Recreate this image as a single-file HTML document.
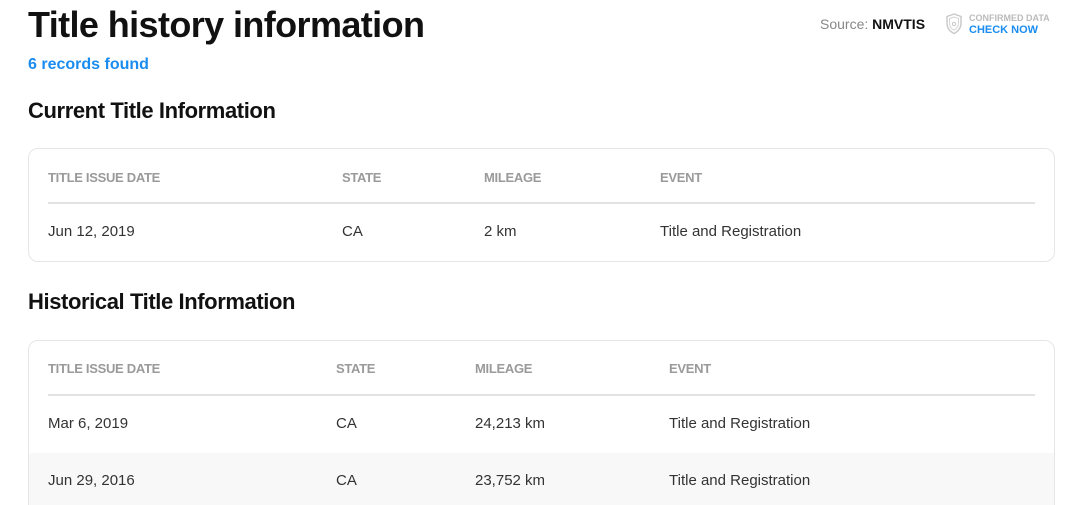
<!DOCTYPE html>
<html style="height:505px;overflow:hidden"><head><style>
body{margin:0;width:1080px;height:505px;overflow:hidden;background:#fff;font-family:"Liberation Sans",sans-serif;color:#222;position:relative}
.a{position:absolute;white-space:nowrap}
.card{position:absolute;left:28px;width:1025px;border:1px solid #e6e6e6;border-radius:10px;overflow:hidden}
.h{font-size:13px;font-weight:bold;color:#9a9a9a;letter-spacing:-0.3px}
.c{font-size:15px;color:#333}
.line{position:absolute;left:19px;right:19px;height:2px;background:#e2e2e2}
</style></head><body>
<div class="a" style="left:28px;top:4px;font-size:36px;font-weight:bold;letter-spacing:-0.6px;color:#111">Title history information</div>
<div class="a" style="left:28px;top:56px;font-size:16px;font-weight:bold;color:#1a8cf0">6 records found</div>
<div class="a" style="left:820px;top:16px;font-size:14px;color:#888">Source: <span style="color:#111;font-weight:bold">NMVTIS</span></div>
<svg class="a" style="left:945px;top:13px" width="18" height="22" viewBox="0 0 18 22"><path d="M9 1L2 3.5V10c0 5 3 8.5 7 10.5 4-2 7-5.5 7-10.5V3.5z" fill="none" stroke="#c8c8c8" stroke-width="1.4"/><path d="M9 4L4.5 5.5V10c0 3.3 2 5.8 4.5 7.2 2.5-1.4 4.5-3.9 4.5-7.2V5.5z" fill="none" stroke="#d5d5d5" stroke-width="1"/><circle cx="9" cy="11" r="1.6" fill="none" stroke="#c8c8c8"/></svg>
<div class="a" style="left:969px;top:13px;font-size:9px;font-weight:bold;color:#bbb">CONFIRMED DATA</div>
<div class="a" style="left:969px;top:24px;font-size:11px;font-weight:bold;color:#1a8cf0">CHECK NOW</div>
<div class="a" style="left:28px;top:98px;font-size:22px;font-weight:bold;color:#111;letter-spacing:-0.4px">Current Title Information</div>
<div class="card" style="top:148px;height:112px">
<div class="a h" style="left:19px;top:21px">TITLE ISSUE DATE</div>
<div class="a h" style="left:313px;top:21px">STATE</div>
<div class="a h" style="left:455px;top:21px">MILEAGE</div>
<div class="a h" style="left:631px;top:21px">EVENT</div>
<div class="line" style="top:53px"></div>
<div class="a c" style="left:19px;top:74px">Jun 12, 2019</div>
<div class="a c" style="left:313px;top:74px">CA</div>
<div class="a c" style="left:455px;top:74px">2 km</div>
<div class="a c" style="left:631px;top:74px">Title and Registration</div>
</div>
<div class="a" style="left:28px;top:289px;font-size:22px;font-weight:bold;color:#111;letter-spacing:-0.4px">Historical Title Information</div>
<div class="card" style="top:340px;height:180px">
<div style="position:absolute;left:0;right:0;top:112px;height:70px;background:#f8f8f8"></div>
<div class="a h" style="left:19px;top:20px">TITLE ISSUE DATE</div>
<div class="a h" style="left:307px;top:20px">STATE</div>
<div class="a h" style="left:446px;top:20px">MILEAGE</div>
<div class="a h" style="left:640px;top:20px">EVENT</div>
<div class="line" style="top:53px"></div>
<div class="a c" style="left:19px;top:74px">Mar 6, 2019</div>
<div class="a c" style="left:307px;top:74px">CA</div>
<div class="a c" style="left:446px;top:74px">24,213 km</div>
<div class="a c" style="left:640px;top:74px">Title and Registration</div>
<div class="a c" style="left:19px;top:131px">Jun 29, 2016</div>
<div class="a c" style="left:307px;top:131px">CA</div>
<div class="a c" style="left:446px;top:131px">23,752 km</div>
<div class="a c" style="left:640px;top:131px">Title and Registration</div>
</div>
</body></html>
